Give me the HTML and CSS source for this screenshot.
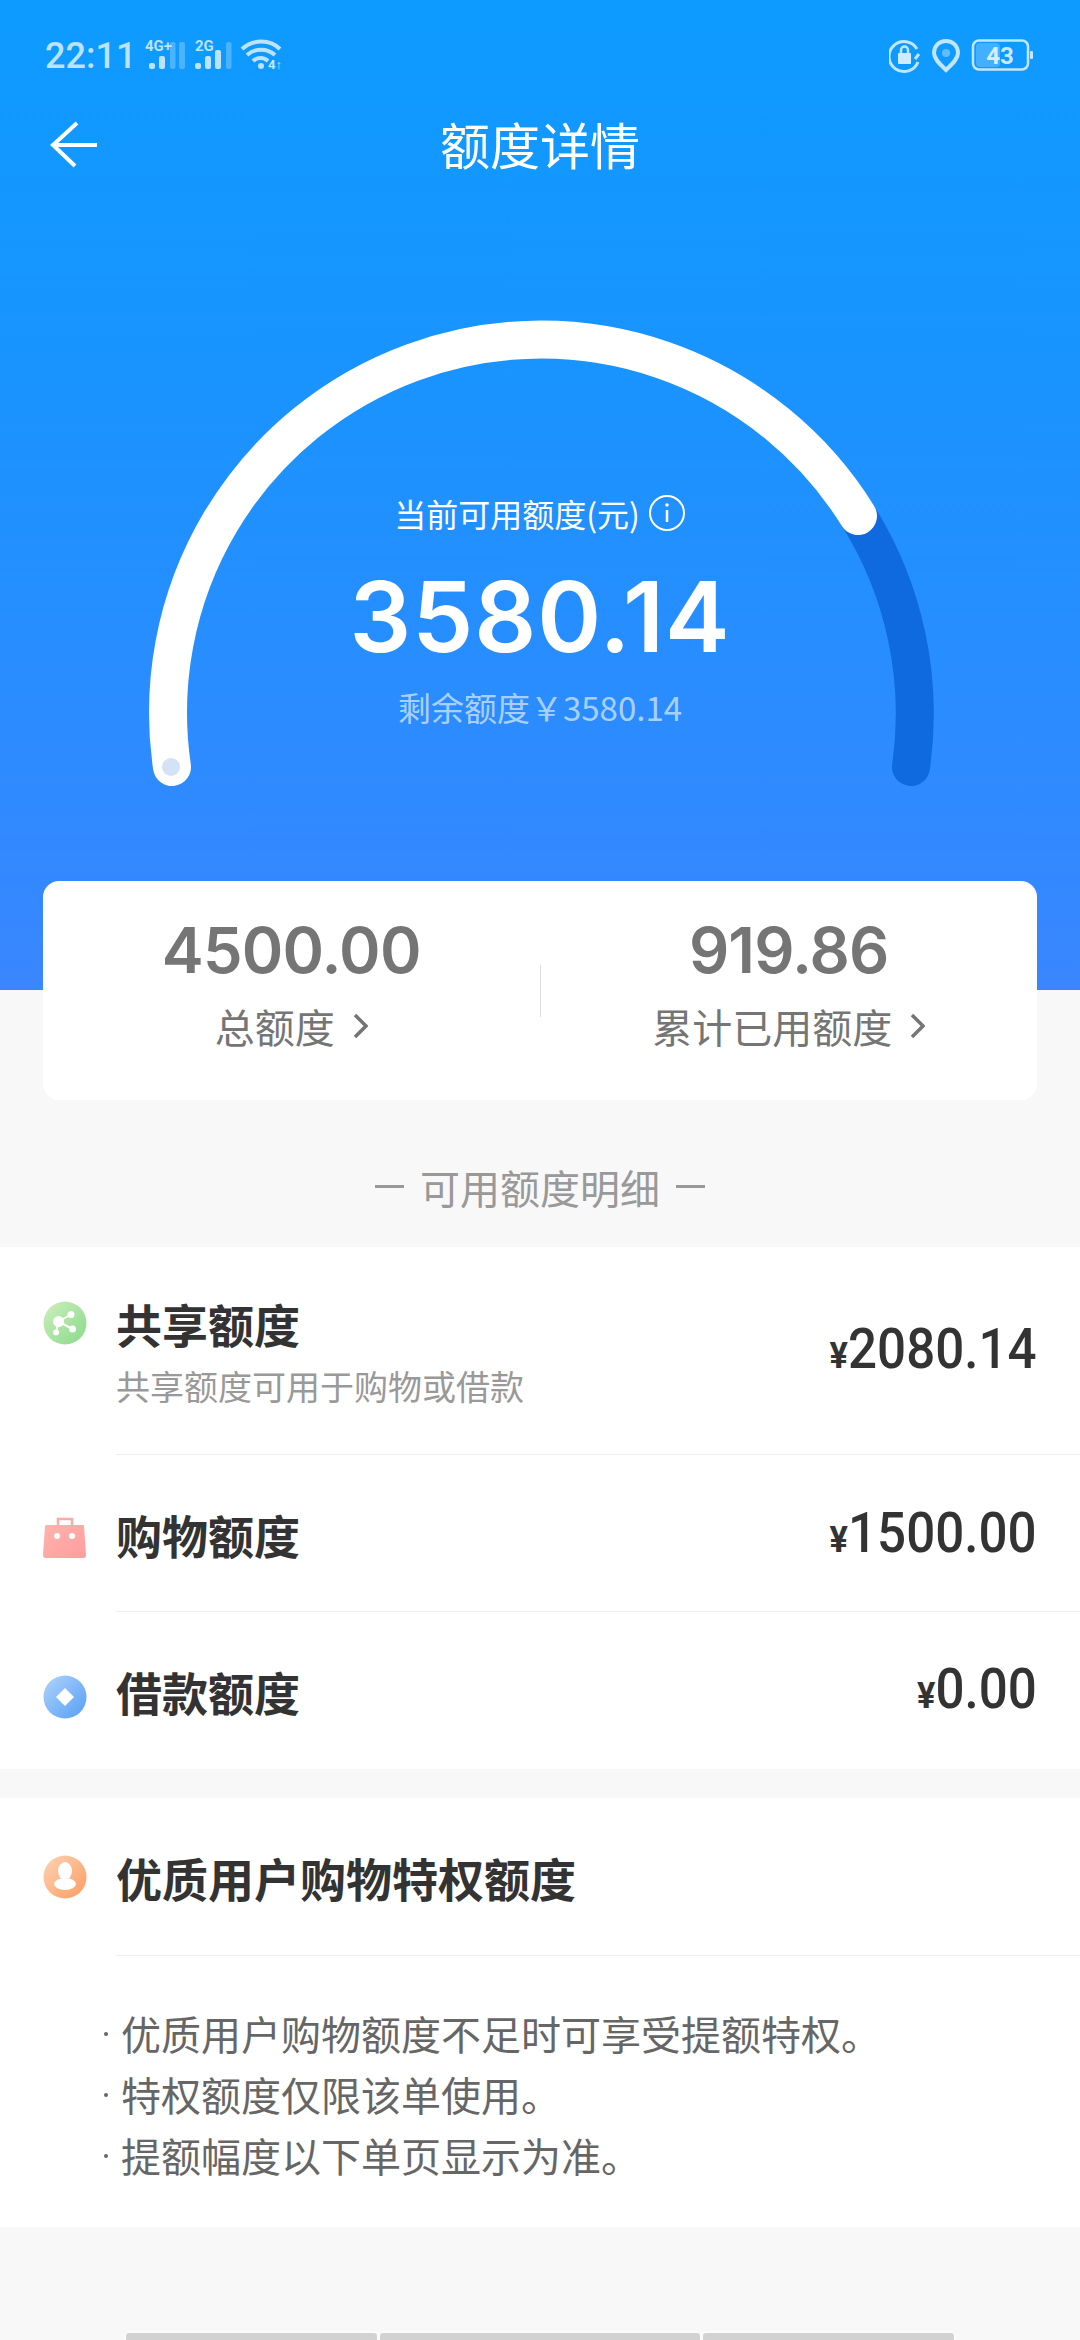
FILE: index.html
```html
<!DOCTYPE html>
<html lang="zh-CN">
<head>
<meta charset="utf-8">
<title>额度详情</title>
<link rel="stylesheet" href="styles.css">
</head>
<body>
<div class="page">
  <header class="hero">
    <div class="status">
      <div class="status-left">
        <span class="time">22:11</span>
        <svg class="sig" width="160" height="50" viewBox="0 -10 160 50">
          <g fill="#fff" fill-opacity=".72">
            <text class="sig-text" x="1" y="10">4G+</text>
            <rect x="5" y="22" width="6" height="6" rx="2"/>
            <rect x="15" y="15" width="6" height="13" rx="2"/>
            <text class="sig-text" x="51" y="10">2G</text>
            <rect x="51" y="22" width="6" height="6" rx="2"/>
            <rect x="61" y="15" width="6" height="13" rx="2"/>
            <rect x="71" y="9" width="6" height="19" rx="2"/>
          </g>
          <g fill="#fff" fill-opacity=".25">
            <rect x="26" y="1" width="5.500" height="27" rx="2"/>
            <rect x="35" y="1" width="6" height="27" rx="2"/>
            <rect x="82" y="1" width="5.500" height="27" rx="2"/>
          </g>
          <g fill="none" stroke="#fff" stroke-opacity=".72" stroke-width="4">
            <path d="M98 8C109 -2 126 -2 136 8"/>
            <path d="M103 14C111 7 123 7 131 14"/>
            <path d="M109 20C113 16 120 16 124 20"/>
          </g>
          <circle cx="117" cy="25" r="3" fill="#fff" fill-opacity=".72"/>
          <text class="wifi-text" x="124" y="28">4↑</text>
        </svg>
      </div>
      <svg class="status-right" width="144" height="40" viewBox="0 0 144 40">
        <g fill="none" stroke="#fff" stroke-opacity=".75" stroke-width="3">
          <path d="M28 10A15 15 0 1 0 29 23"/>
          <path d="M26 20l4-5"/>
          <path d="M12 14v-3a3.500 3.500 0 0 1 7 0v3" stroke-width="2.500"/>
          <path d="M57 2c-7 0-12 5-12 12 0 6 6 11 12 17 6-6 12-11 12-17 0-7-5-12-12-12z" stroke-width="4"/>
          <rect x="84" y="1.500" width="55" height="29" rx="6" stroke-width="2.500"/>
        </g>
        <rect x="9" y="14" width="13" height="11" rx="1" fill="#fff" fill-opacity=".8"/>
        <circle cx="57" cy="14" r="4" fill="#fff" fill-opacity=".35"/>
        <rect x="87" y="4" width="24" height="24" rx="4" fill="#fff" fill-opacity=".22"/>
        <rect x="141" y="12" width="3" height="8" rx="1" fill="#fff" fill-opacity=".75"/>
        <text class="batt-text" x="111" y="25">43</text>
      </svg>
    </div>
    <div class="nav">
      <svg class="back" width="48" height="48" viewBox="0 0 48 48">
        <path d="M28 2L4 24l22 21M4 24h44" fill="none" stroke="#fff" stroke-width="4"/>
      </svg>
      <h1 class="nav-title">额度详情</h1>
    </div>
    <div class="gauge">
      <svg class="gauge-arc" width="1080" height="500" viewBox="0 300 1080 500">
        <path d="M858 516A373 373 0 0 1 911 767" fill="none" stroke="#0f6ae0" stroke-width="38" stroke-linecap="round"/>
        <path d="M172 767A373 373 0 0 1 858 516" fill="none" stroke="#fff" stroke-width="38" stroke-linecap="round"/>
        <circle cx="171" cy="767" r="9" fill="#d3e2f4"/>
      </svg>
      <div class="gauge-info">
        <div class="avail-label">当前可用额度(元)
          <svg class="info" width="38" height="38" viewBox="0 0 38 38">
            <circle cx="19" cy="19" r="17" fill="none" stroke="#fff" stroke-width="2"/>
            <path d="M19 16v12" stroke="#fff" stroke-width="2.500"/>
            <circle cx="19" cy="11" r="1.800" fill="#fff"/>
          </svg>
        </div>
        <div class="avail-num">3580.14</div>
        <div class="remain">剩余额度￥3580.14</div>
      </div>
    </div>
  </header>

  <section class="card">
    <div class="card-col">
      <div class="card-num">4500.00</div>
      <div class="card-label">总额度
        <svg class="chev" width="16" height="26" viewBox="0 0 16 26"><path d="M3 2l11 11L3 24" fill="none" stroke="#757575" stroke-width="3.500"/></svg>
      </div>
    </div>
    <div class="card-div"></div>
    <div class="card-col">
      <div class="card-num">919.86</div>
      <div class="card-label">累计已用额度
        <svg class="chev" width="16" height="26" viewBox="0 0 16 26"><path d="M3 2l11 11L3 24" fill="none" stroke="#757575" stroke-width="3.500"/></svg>
      </div>
    </div>
  </section>

  <div class="sec-title"><i class="dash"></i><span>可用额度明细</span><i class="dash"></i></div>

  <section class="list">
    <div class="row row-share">
      <svg class="ico" width="44" height="44" viewBox="0 0 44 44">
        <defs>
          <linearGradient id="gGreen" x1="0" y1="0" x2="1" y2="1"><stop offset="0" stop-color="#cdeebb"/><stop offset="1" stop-color="#88da8a"/></linearGradient>
          <linearGradient id="gPink" x1="0" y1="0" x2="1" y2="1"><stop offset="0" stop-color="#ffb4ae"/><stop offset="1" stop-color="#ff9c9e"/></linearGradient>
        </defs>
        <circle cx="22" cy="22" r="21.500" fill="url(#gGreen)"/>
        <path d="M15.500 20.500L28 13.500M15.500 20.500L29.500 28M15.500 20.500L13 31.500" stroke="#fff" stroke-width="2"/>
        <circle cx="15.500" cy="20.500" r="5.500" fill="#fff"/>
        <circle cx="28" cy="13.500" r="3.500" fill="#fff"/>
        <circle cx="29.500" cy="28" r="3.500" fill="#fff"/>
        <circle cx="13" cy="31.500" r="3" fill="#fff"/>
      </svg>
      <div class="row-body">
        <div class="row-text">
          <div class="row-title">共享额度</div>
          <div class="row-sub">共享额度可用于购物或借款</div>
        </div>
        <div class="amount"><small>¥</small>2080.14</div>
      </div>
    </div>
    <div class="row row-shop">
      <svg class="ico" width="44" height="44" viewBox="0 0 44 44">
        <path d="M15 10V3h14v7" fill="none" stroke="#ffa9a8" stroke-width="2.500"/>
        <path d="M4 9h36a1 1 0 0 1 1 1l2 29a3 3 0 0 1-3 3H3a3 3 0 0 1-3-3l2-29a2 2 0 0 1 2-1z" fill="url(#gPink)"/>
        <circle cx="14" cy="20" r="3" fill="#fff"/>
        <circle cx="29" cy="20" r="3" fill="#fff"/>
      </svg>
      <div class="row-body">
        <div class="row-text"><div class="row-title">购物额度</div></div>
        <div class="amount"><small>¥</small>1500.00</div>
      </div>
    </div>
    <div class="row row-loan">
      <svg class="ico" width="44" height="44" viewBox="0 0 44 44">
        <defs><linearGradient id="gBlue" x1="0" y1="0" x2="1" y2="1"><stop offset="0" stop-color="#b0d3fb"/><stop offset="1" stop-color="#559ff6"/></linearGradient></defs>
        <circle cx="22" cy="22" r="21.500" fill="url(#gBlue)"/>
        <path d="M22 13l9 9-9 9-9-9z" fill="#fff"/>
      </svg>
      <div class="row-body">
        <div class="row-text"><div class="row-title">借款额度</div></div>
        <div class="amount"><small>¥</small>0.00</div>
      </div>
    </div>
  </section>

  <section class="priv">
    <div class="row row-priv">
      <svg class="ico" width="44" height="44" viewBox="0 0 44 44">
        <defs><linearGradient id="gOrange" x1="0" y1="0" x2="1" y2="1"><stop offset="0" stop-color="#fdd3b4"/><stop offset="1" stop-color="#fb9c62"/></linearGradient></defs>
        <circle cx="22" cy="22" r="21.500" fill="url(#gOrange)"/>
        <ellipse cx="22" cy="16" rx="7" ry="9" fill="#fff"/>
        <ellipse cx="22" cy="29" rx="11" ry="6" fill="#fff"/>
      </svg>
      <div class="row-body"><div class="row-text"><div class="row-title">优质用户购物特权额度</div></div></div>
    </div>
    <ul class="notes">
      <li>优质用户购物额度不足时可享受提额特权。</li>
      <li>特权额度仅限该单使用。</li>
      <li>提额幅度以下单页显示为准。</li>
    </ul>
  </section>

  <div class="home-hint">
    <i></i><i class="mid"></i><i></i>
  </div>
</div>
</body>
</html>
```

FILE: styles.css
```css
* { box-sizing: border-box; margin: 0; padding: 0; }
html, body { width: 1080px; height: 2340px; overflow: hidden; }
body { font-family: Roboto, "Noto Sans CJK SC", sans-serif; background: #f8f8f8; }

.page { width: 1080px; height: 2340px; display: flex; flex-direction: column; overflow: hidden; position: relative; }

/* hero */
.hero { height: 990px; flex: none; background: linear-gradient(180deg, #0d9bff 0%, #1a93ff 40%, #3a86ff 100%); color: #fff; }

.status { height: 110px; padding: 41px 47px 0 45px; display: flex; justify-content: space-between; align-items: flex-start; }
.status-left { display: flex; align-items: flex-start; gap: 8px; }
.time { font-size: 36px; line-height: 30px; font-weight: 500; color: rgba(255,255,255,.72); }
.sig { display: block; margin-top: -10px; }
.sig-text { font: 700 15px Roboto, sans-serif; }
.wifi-text { font: 700 13px Roboto, sans-serif; fill: rgba(255,255,255,.8); }
.batt-text { font: 700 24px Roboto, sans-serif; fill: rgba(255,255,255,.8); text-anchor: middle; }
.status-right { display: block; margin-top: -2px; }

.nav { height: 66px; position: relative; display: flex; align-items: center; justify-content: center; }
.back { position: absolute; left: 49px; top: 11px; }
.nav-title { font-size: 50px; line-height: 66px; font-weight: 400; font-family: "Noto Sans CJK SC", sans-serif; }

.gauge { margin-top: 124px; height: 500px; position: relative; }
.gauge-arc { display: block; }
.gauge-info { position: absolute; left: 0; right: 0; top: 190px; text-align: center; }
.avail-label { height: 46px; font-size: 32px; line-height: 46px; display: flex; justify-content: center; align-items: center; gap: 8px; font-family: "Noto Sans CJK SC", sans-serif; white-space: nowrap; }
.info { display: block; }
.avail-num { margin-top: 24px; font-family: Inter, Roboto, sans-serif; font-size: 97px; line-height: 114px; font-weight: 600; letter-spacing: 1px; }
.remain { margin-top: 10px; font-size: 33px; line-height: 46px; color: rgba(255,255,255,.62); font-family: "Noto Sans CJK SC", sans-serif; }

/* summary card */
.card { width: 994px; height: 219px; flex: none; margin: -109px 0 0 43px; background: #fff; border-radius: 16px; display: flex; color: #757575; position: relative; }
.card-col { flex: 1; text-align: center; padding-top: 30px; }
.card-num { font-family: Inter, Roboto, sans-serif; font-size: 63px; line-height: 78px; font-weight: 600; letter-spacing: -.8px; }
.card-label { margin-top: 8px; height: 58px; font-size: 40px; line-height: 58px; display: flex; justify-content: center; align-items: center; gap: 17px; font-family: "Noto Sans CJK SC", sans-serif; }
.chev { display: block; }
.card-div { width: 1px; height: 52px; margin-top: 84px; background: #ddd; flex: none; }

.sec-title { height: 147px; flex: none; padding-top: 26px; display: flex; align-items: center; justify-content: center; gap: 16px; font-size: 40px; color: #999; font-family: "Noto Sans CJK SC", sans-serif; }
.dash { width: 29px; height: 3px; background: #999; display: block; }

/* list */
.list, .priv { background: #fff; flex: none; }
.list { height: 522px; }
.row { display: flex; align-items: flex-start; padding-left: 43px; gap: 29px; }
.ico { display: block; flex: none; }
.row-body { flex: 1; display: flex; justify-content: space-between; align-items: flex-start; border-bottom: 1px solid #eee; padding-right: 43px; }
.row-title { font-size: 46px; line-height: 64px; font-weight: 700; color: #333; font-family: "Noto Sans CJK SC", sans-serif; }
.row-sub { font-size: 34px; line-height: 50px; color: #999; font-family: "Noto Sans CJK SC", sans-serif; margin-top: 6px; }
.amount { font-size: 55px; font-weight: 500; color: #333; line-height: 64px; transform: scaleX(.93); transform-origin: right center; }
.amount small { font-size: 37px; font-weight: 700; }

.row-share .ico { margin-top: 54px; }
.row-share .row-body { height: 208px; }
.row-share .row-text { padding-top: 44px; }
.row-share .amount { margin-top: 70px; }
.row-shop .ico { margin-top: 61px; }
.row-shop .row-body { height: 157px; }
.row-shop .row-text { padding-top: 47px; }
.row-shop .amount { margin-top: 46px; }
.row-loan .ico { margin-top: 63px; }
.row-loan .row-body { height: 157px; border-bottom: 0; }
.row-loan .row-text { padding-top: 47px; }
.row-loan .amount { margin-top: 45px; }

.priv { margin-top: 29px; height: 429px; }
.row-priv .ico { margin-top: 57px; }
.row-priv .row-body { height: 158px; }
.row-priv .row-text { padding-top: 47px; }
.notes { list-style: none; padding: 47px 0 0 121px; font-size: 40px; line-height: 61px; color: #666; font-family: "Noto Sans CJK SC", sans-serif; }
.notes li { position: relative; }
.notes li::before { content: ""; position: absolute; left: -17px; top: 29px; width: 4px; height: 4px; border-radius: 50%; background: #666; }

.home-hint { flex: 1; display: flex; align-items: flex-end; justify-content: center; gap: 3px; }
.home-hint i { display: block; width: 251px; height: 7px; background: #d2d2d2; border-radius: 3px 3px 0 0; box-shadow: 0 0 0 2px #fbfbfb; }
.home-hint i.mid { width: 320px; }
```
